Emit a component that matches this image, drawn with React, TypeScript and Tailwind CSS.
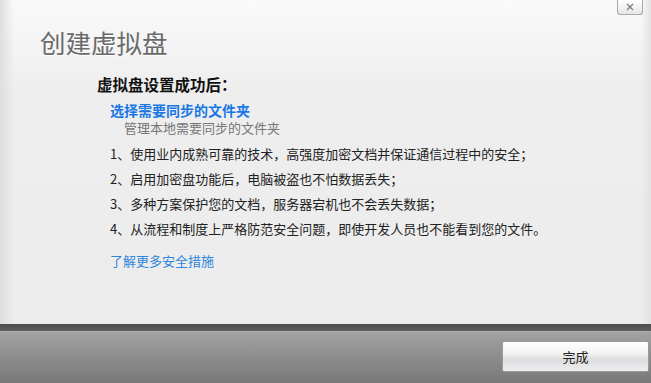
import React from "react";

const items = [
  "1、使用业内成熟可靠的技术，高强度加密文档并保证通信过程中的安全；",
  "2、启用加密盘功能后，电脑被盗也不怕数据丢失；",
  "3、多种方案保护您的文档，服务器宕机也不会丢失数据；",
  "4、从流程和制度上严格防范安全问题，即使开发人员也不能看到您的文件。",
];

export default function App() {
  return (
    <div className="w-[651px] h-[383px] overflow-hidden flex flex-col font-['Noto_Sans_CJK_SC','Noto_Sans',sans-serif]">
      <div className="relative h-[324px] bg-[linear-gradient(to_bottom,#fafafa_0px,#eeeeee_90px,#ececec_100%)]">
        <div className="absolute inset-y-0 left-0 w-[14px] bg-[linear-gradient(to_right,#dedede,#ececec00)]" />
        <div className="absolute inset-y-0 right-0 w-[10px] bg-[linear-gradient(to_left,#e2e2e2,#ececec00)]" />

        <button className="absolute right-[8px] top-0 w-[26px] h-[15px] border border-t-0 border-[#a9a9a9] rounded-b-[3px] bg-[linear-gradient(to_bottom,#ffffff,#e6e6e6)] flex items-center justify-center">
          <svg width="8" height="8" viewBox="0 0 8 8">
            <path d="M1 1 L7 7 M7 1 L1 7" stroke="#7a7a7a" strokeWidth="1.3" />
          </svg>
        </button>

        <div className="relative pt-[27px] pl-[40px] text-[25.5px] leading-[30px] text-[#6a6a6a] [text-shadow:0_1px_0_#ffffff]">
          创建虚拟盘
        </div>

        <div className="relative pl-[97px]">
          <div className="mt-[17px] text-[15.5px] leading-[20px] font-bold text-[#111]">虚拟盘设置成功后：</div>
          <div className="mt-[7px] pl-[13px] text-[14px] leading-[18px] font-bold text-[#1a78e6]">选择需要同步的文件夹</div>
          <div className="pl-[27px] text-[13px] leading-[18px] text-[#777]">管理本地需要同步的文件夹</div>
          <div className="mt-[4px] pl-[13px] flex flex-col">
            {items.map((t) => (
              <div key={t} className="text-[13px] leading-[25px] text-[#222]">
                {t}
              </div>
            ))}
          </div>
          <div className="mt-[11px] pl-[13px] text-[13px] leading-[18px] text-[#2f86dd]">了解更多安全措施</div>
        </div>
      </div>

      <div className="h-[7px] bg-[linear-gradient(to_bottom,#4c4c4c,#5e5e5e)] border-b border-[#b0b0b0] box-content" />

      <div className="flex-1 bg-[linear-gradient(to_bottom,#a2a2a2,#787878)] flex justify-end pt-[9px] pr-[2px]">
        <button className="w-[147px] h-[31px] rounded-[2px] border border-[#9a9a9a] bg-[linear-gradient(to_bottom,#ffffff_0%,#f2f2f2_40%,#dcdde0_60%,#eeeeee_100%)] text-[13px] text-[#222] flex items-center justify-center">
          完成
        </button>
      </div>
    </div>
  );
}
